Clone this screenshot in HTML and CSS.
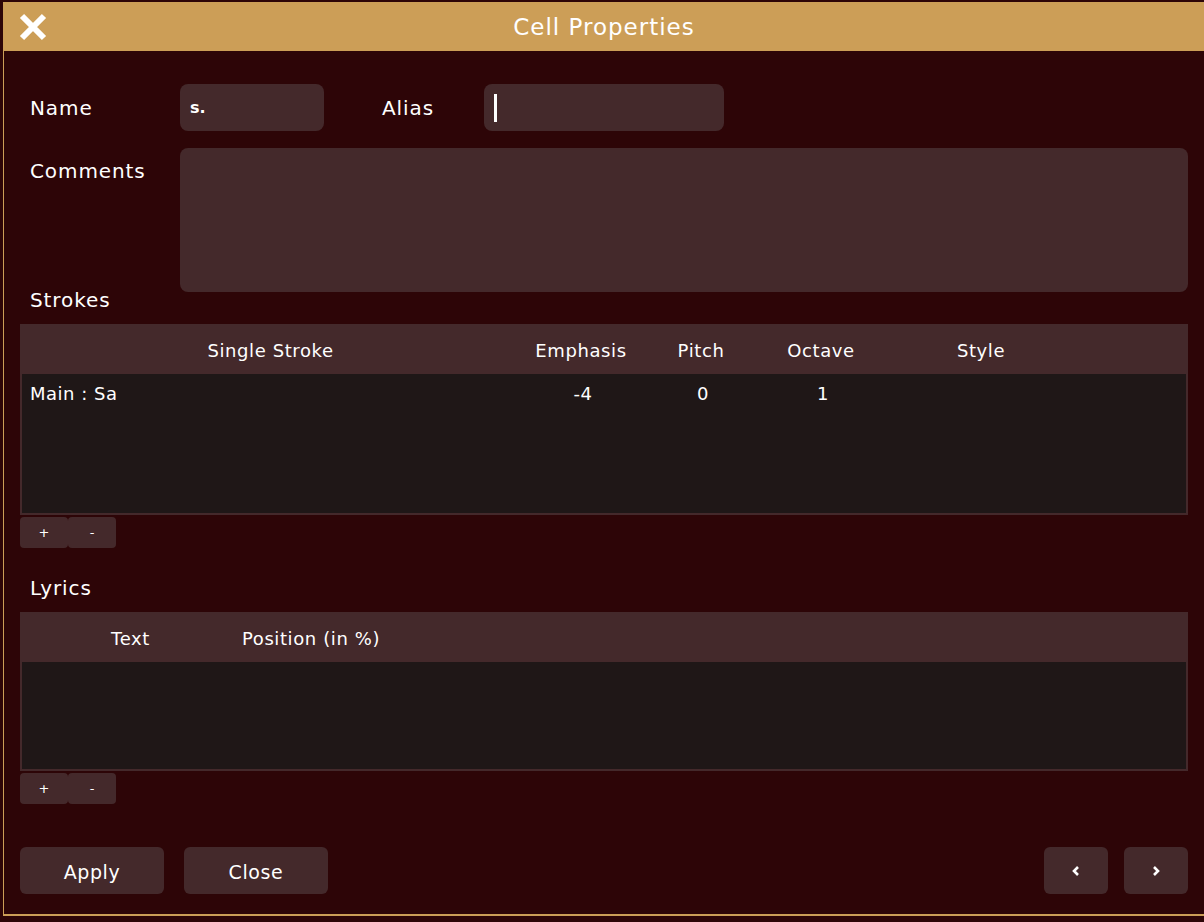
FILE: index.html
```html
<!DOCTYPE html>
<html>
<head>
<meta charset="utf-8">
<link rel="stylesheet" href="styles.css">
</head>
<body>
<div class="dialog">
  <div class="header">
    <div class="close-x">
      <svg width="30" height="30" viewBox="0 0 30 30"><path d="M4 4 L26 26 M26 4 L4 26" stroke="#fff" stroke-width="6" stroke-linecap="butt" fill="none"/></svg>
    </div>
    <div class="title">Cell Properties</div>
    <div></div>
  </div>
  <div class="content">
    <div class="row1">
      <div class="label">Name</div>
      <div class="input name-input">s.</div>
      <div class="label alias-label">Alias</div>
      <div class="input alias-input"><span class="caret"></span></div>
    </div>
    <div class="row2">
      <div class="label comments-label">Comments</div>
      <div class="input textarea"></div>
    </div>
    <div class="label section strokes-label">Strokes</div>
    <div class="table">
      <div class="thead strokes-cols">
        <div>Single Stroke</div><div>Emphasis</div><div>Pitch</div><div>Octave</div><div>Style</div><div></div>
      </div>
      <div class="tbody strokes-body">
        <div class="trow strokes-cols">
          <div class="left">Main : Sa</div><div>-4</div><div>0</div><div>1</div><div></div><div></div>
        </div>
      </div>
    </div>
    <div class="pm"><div class="pmbtn">+</div><div class="pmbtn">-</div></div>
    <div class="label section lyrics-label">Lyrics</div>
    <div class="table">
      <div class="thead lyrics-cols">
        <div>Text</div><div>Position (in %)</div><div></div>
      </div>
      <div class="tbody lyrics-body"></div>
    </div>
    <div class="pm"><div class="pmbtn">+</div><div class="pmbtn">-</div></div>
    <div class="footer">
      <div class="btn">Apply</div>
      <div class="btn">Close</div>
      <div class="spacer"></div>
      <div class="btn nav"><svg width="12" height="14" viewBox="0 0 12 14"><path d="M8 3 L4 7 L8 11" stroke="#fff" stroke-width="2.6" fill="none"/></svg></div>
      <div class="btn nav"><svg width="12" height="14" viewBox="0 0 12 14"><path d="M4 3 L8 7 L4 11" stroke="#fff" stroke-width="2.6" fill="none"/></svg></div>
    </div>
  </div>
</div>
</body>
</html>
```
FILE: styles.css
```css
html, body {
  margin: 0;
  padding: 0;
  background: #2d0507;
  font-family: "DejaVu Sans", "Noto Sans", sans-serif;
  color: #fff;
  overflow: hidden;
}
.dialog {
  margin: 2px 0 0 3px;
  border-left: 1px solid #cc9e57;
  border-bottom: 2px solid #cc9e57;
  height: 912px;
  background: #2d0507;
}
.header {
  height: 49px;
  background: #cc9e57;
  display: grid;
  grid-template-columns: 1fr auto 1fr;
  align-items: center;
}
.close-x {
  padding-left: 14px;
  display: flex;
  align-items: center;
  height: 30px;
}
.title {
  font-size: 23px;
  letter-spacing: 1px;
}
.content {
  padding: 33px 16px 0 16px;
}
.label {
  font-size: 20px;
  letter-spacing: 0.9px;
  padding-left: 10px;
}
.input {
  background: #44292b;
  border-radius: 8px;
}
.row1 {
  display: flex;
  align-items: center;
  height: 47px;
}
.row1 .label:first-child {
  width: 150px;
}
.name-input {
  width: 144px;
  height: 47px;
  box-sizing: border-box;
  padding: 10px 10px;
  font-size: 16px;
  font-weight: 700;
  line-height: 27px;
}
.alias-label {
  margin-left: 48px;
  width: 92px;
  box-sizing: content-box;
}
.alias-input {
  margin-left: 10px;
  width: 240px;
  height: 47px;
  display: flex;
  align-items: center;
  padding-left: 10px;
  box-sizing: border-box;
}
.caret {
  display: block;
  width: 3px;
  height: 28px;
  background: #fff;
}
.row2 {
  display: flex;
  margin-top: 17px;
}
.comments-label {
  width: 150px;
  padding-top: 9px;
  line-height: 28px;
}
.textarea {
  flex: 1;
  height: 144px;
}
.section {
  line-height: 24px;
}
.strokes-label {
  margin-top: -4px;
  margin-bottom: 12px;
}
.lyrics-label {
  margin-top: 28px;
  margin-bottom: 12px;
}
.thead {
  background: #44292b;
  height: 50px;
  align-items: center;
  font-size: 18px;
  letter-spacing: 0.6px;
  padding-top: 2px;
  box-sizing: border-box;
}
.thead > div, .trow > div {
  text-align: center;
}
.strokes-cols {
  display: grid;
  grid-template-columns: 501px 120px 120px 120px 200px 1fr;
}
.lyrics-cols {
  display: grid;
  grid-template-columns: 221px 140px 1fr;
}
.tbody {
  background: #1f1717;
  border: 2px solid #44292b;
  border-top: none;
}
.strokes-body {
  height: 139px;
}
.lyrics-body {
  height: 107px;
}
.trow {
  padding-top: 8px;
  line-height: 24px;
  font-size: 18px;
  letter-spacing: 0.5px;
}
.trow > .left {
  text-align: left;
  padding-left: 8px;
}
.pm {
  display: flex;
  margin-top: 2px;
}
.pmbtn {
  width: 48px;
  height: 31px;
  background: #44292b;
  border-radius: 4px;
  font-size: 13px;
  display: flex;
  align-items: center;
  justify-content: center;
}
.footer {
  display: flex;
  margin-top: 43px;
  gap: 20px;
}
.spacer {
  flex: 1;
}
.btn {
  width: 144px;
  height: 47px;
  background: #44292b;
  border-radius: 6px;
  display: flex;
  align-items: center;
  justify-content: center;
  font-size: 19px;
  letter-spacing: 0.6px;
  padding-top: 3px;
  box-sizing: border-box;
}
.btn.nav {
  width: 64px;
  margin-left: -4px;
  padding-top: 0;
}
```
